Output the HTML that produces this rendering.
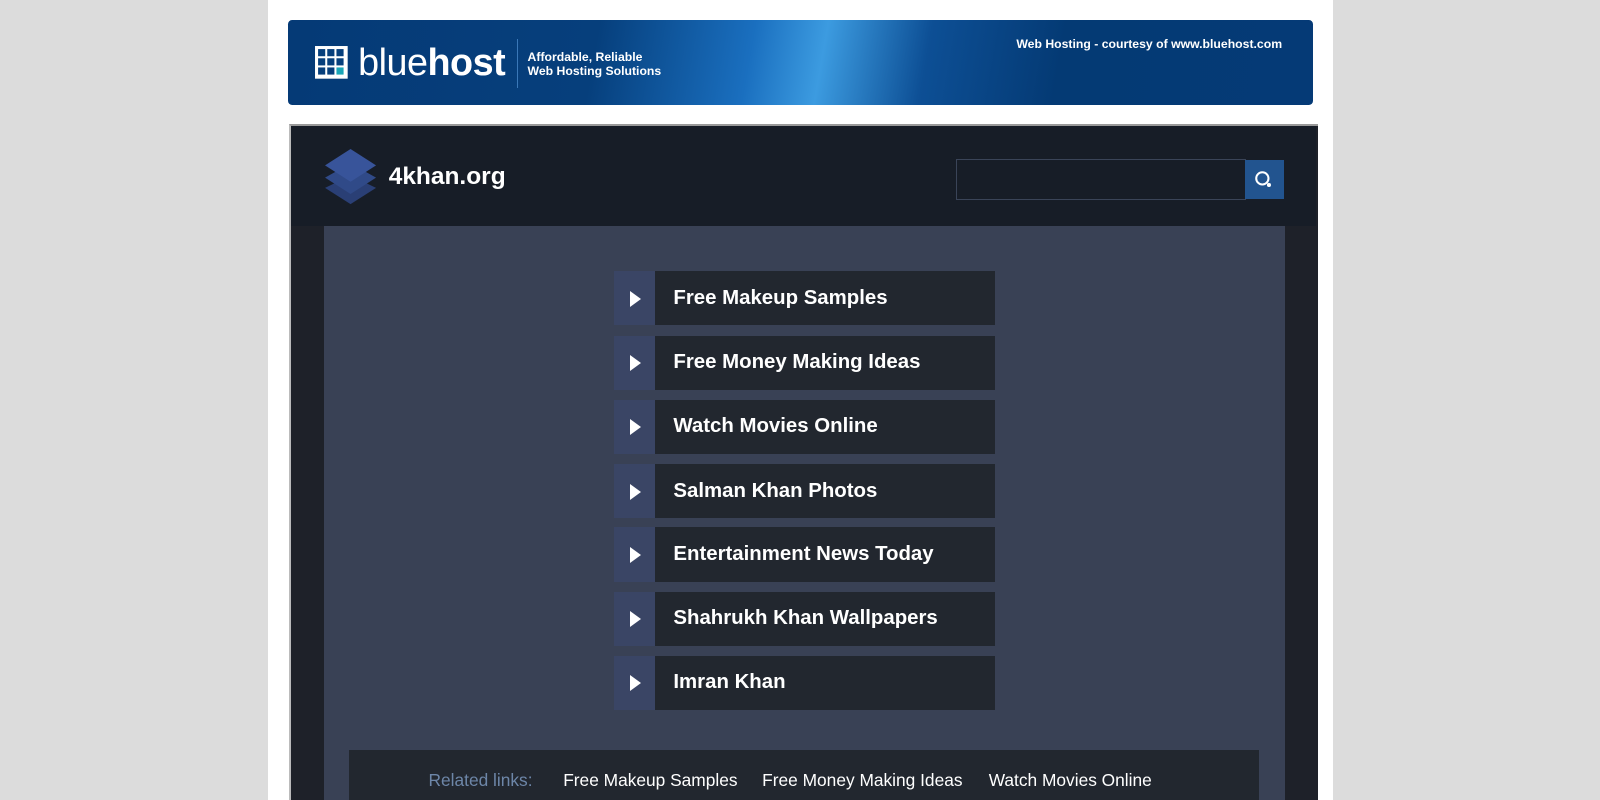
<!DOCTYPE html>
<html style="overflow:hidden;height:800px"><head><style>
body{margin:0;background:#dcdcdc;font-family:"Liberation Sans",sans-serif;width:1600px;height:800px;overflow:hidden}
.z{zoom:1.0204;position:relative;width:1568px;height:784px;overflow:hidden}
.col{position:absolute;left:263px;top:0;width:1043px;height:784px;background:#fff}
.banner{position:absolute;left:282px;top:20px;width:1005px;height:83px;border-radius:4px;background:linear-gradient(100deg,#053a76 0%,#063f7c 30%,#1a6fbf 45%,#3c9be0 52%,#0d4f95 62%,#043a74 75%,#053a76 100%)}
.wrap{position:absolute;left:283px;top:122px;width:1007px;height:700px;background:#1e2129;border-top:2px solid #999;border-left:2px solid #bbb}
.head{position:absolute;left:0;top:0;width:1005px;height:98px;background:#171d27}
.content{position:absolute;left:33px;top:98px;width:941px;height:610px;background:#394155}
.item{position:absolute;left:284px;width:373px;height:53px;background:#22272f}
.item .ic{position:absolute;left:0;top:0;width:40px;height:53px;background:#3a4565}
.item .ic:after{content:"";position:absolute;left:15px;top:19px;border-left:11px solid #fff;border-top:8px solid transparent;border-bottom:8px solid transparent}
.item span{position:absolute;left:58px;top:15px;color:#fff;font-weight:bold;font-size:20px}
.rel{position:absolute;left:24px;top:513px;width:892px;height:90px;background:#22272f;color:#fff;font-size:17px}
</style></head><body><div class="z">
<div class="col"></div>
<div class="banner">
<svg style="position:absolute;left:26px;top:24px" width="34" height="34"><rect x="1" y="1" width="32" height="32" fill="#fff"/><g fill="#063f7c"><rect x="4" y="4" width="7" height="7"/><rect x="13" y="4" width="7" height="7"/><rect x="22" y="4" width="7" height="7"/><rect x="4" y="13" width="7" height="7"/><rect x="13" y="13" width="7" height="7"/><rect x="22" y="13" width="7" height="7"/><rect x="4" y="22" width="7" height="7"/><rect x="13" y="22" width="7" height="7"/></g><rect x="22" y="22" width="7" height="7" fill="#1aa6b7"/></svg>
<div style="position:absolute;left:69px;top:20px;color:#fff;font-size:37px;letter-spacing:-0.5px"><span style="font-weight:300">blue</span><b>host</b></div>
<div style="position:absolute;left:225px;top:18px;width:1px;height:48px;background:#3a78b8"></div>
<div style="position:absolute;left:235px;top:29px;color:#fff;font-size:12px;font-weight:bold;line-height:14px">Affordable, Reliable<br>Web Hosting Solutions</div>
<div style="position:absolute;left:714px;top:16px;color:#fff;font-size:12px;font-weight:bold">Web Hosting - courtesy of www.bluehost.com</div>
</div>
<div class="wrap">
<div class="head">
<svg style="position:absolute;left:32px;top:20px" width="54" height="60"><path d="M27 28 L52 40 L27 56 L2 40Z" fill="#2a3f75"/><path d="M27 16 L52 30 L27 46 L2 30Z" fill="#304a88"/><path d="M27 2 L52 18 L27 34 L2 18Z" fill="#38549a"/></svg>
<div style="position:absolute;left:96px;top:36px;color:#fff;font-size:24px;font-weight:bold">4khan.org</div>
<div style="position:absolute;left:652px;top:32px;width:282px;height:38px;border:1px solid #3a4458;background:#171d27"></div>
<div style="position:absolute;left:935px;top:33px;width:38px;height:38px;background:#22548f"><svg width="38" height="38"><circle cx="17" cy="18" r="6" fill="none" stroke="#fff" stroke-width="2"/><circle cx="23.5" cy="24.5" r="2" fill="#fff"/></svg></div>
</div>
<div class="content">
<div class="item" style="top:44px"><div class="ic"></div><span>Free Makeup Samples</span></div>
<div class="item" style="top:107px"><div class="ic"></div><span>Free Money Making Ideas</span></div>
<div class="item" style="top:170px"><div class="ic"></div><span>Watch Movies Online</span></div>
<div class="item" style="top:233px"><div class="ic"></div><span>Salman Khan Photos</span></div>
<div class="item" style="top:295px"><div class="ic"></div><span>Entertainment News Today</span></div>
<div class="item" style="top:358px"><div class="ic"></div><span>Shahrukh Khan Wallpapers</span></div>
<div class="item" style="top:421px"><div class="ic"></div><span>Imran Khan</span></div>
<div class="rel"><span style="position:absolute;left:78px;top:20px;color:#6d86a8">Related links:</span><span style="position:absolute;left:210px;top:20px">Free Makeup Samples</span><span style="position:absolute;left:405px;top:20px">Free Money Making Ideas</span><span style="position:absolute;left:627px;top:20px">Watch Movies Online</span></div>
</div>
</div>
</div></body></html>
